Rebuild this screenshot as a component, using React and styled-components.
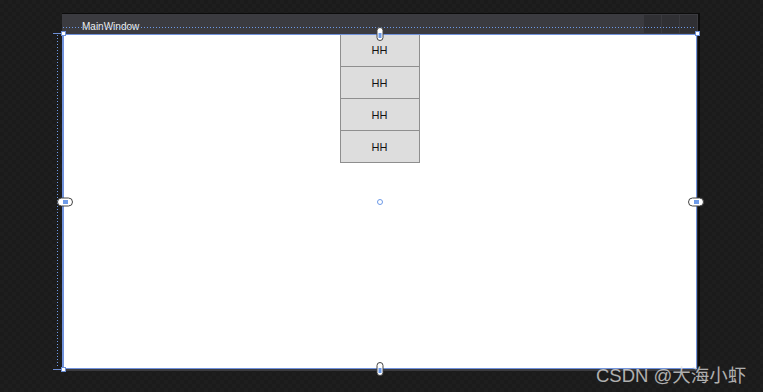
import styled, { createGlobalStyle } from "styled-components";

const GlobalStyle = createGlobalStyle`
  html, body {
    margin: 0;
    padding: 0;
    background: #1e1e1e;
  }
  body {
    font-family: "Liberation Sans", Arial, sans-serif;
  }
`;

const Stage = styled.div`
  position: relative;
  width: 763px;
  height: 392px;
  overflow: hidden;
  box-sizing: border-box;
  padding: 13px 0 0 62px;
  background-color: #1e1e1e;
  background-image:
    linear-gradient(45deg, #1b1b1b 25%, transparent 25%, transparent 75%, #1b1b1b 75%),
    linear-gradient(45deg, #1b1b1b 25%, transparent 25%, transparent 75%, #1b1b1b 75%);
  background-size: 8px 8px;
  background-position: 0 0, 4px 4px;
`;

const Window = styled.div`
  width: 636px;
  display: flex;
  flex-direction: column;
  background: #2b2b2e;
  border-top: 1px solid #0c0c0c;
  border-right: 2px solid #0c0c0c;
  border-bottom: 2px solid #3a3a3e;
`;

const TitleBar = styled.div`
  height: 20px;
  box-sizing: border-box;
  display: flex;
  align-items: stretch;
  padding-left: 20px;
  background: #3b3b40;
`;

const Title = styled.span`
  flex: 1;
  font-size: 10px;
  line-height: 10px;
  padding-top: 8px;
  color: #ececec;
`;

const CaptionButtons = styled.div`
  display: flex;
  gap: 1px;
  padding: 1px 1px 1px 0;
`;

const CaptionButton = styled.div`
  width: 17px;
  background: #303034;
`;

const Client = styled.div`
  height: 333px;
  margin-right: 1px;
  background: #ffffff;
  border: 1px solid #7092dc;
  border-left-width: 2px;
  display: flex;
  flex-direction: column;
  align-items: center;
`;

const ButtonStack = styled.div`
  display: flex;
  flex-direction: column;
  margin-left: -1px;
`;

const HButton = styled.div`
  box-sizing: border-box;
  width: 80px;
  height: ${(p) => (p.first ? "32px" : "33px")};
  margin-top: ${(p) => (p.first ? "0" : "-1px")};
  display: flex;
  align-items: center;
  justify-content: center;
  background: #dddddd;
  border: 1px solid #8e8e8e;
  border-top: ${(p) => (p.first ? "none" : "1px solid #8e8e8e")};
  font-size: 11px;
  line-height: 11px;
  padding-top: ${(p) => (p.first ? "0" : "1px")};
  color: #111;
`;

const dots = (dir) =>
  `repeating-linear-gradient(${dir}, #6d9ae8 0 1px, transparent 1px 3px)`;

const DotLineH = styled.div`
  position: absolute;
  left: 63px;
  top: 27px;
  width: 633px;
  height: 1px;
  background: ${dots("90deg")};
`;

const DotLineV = styled.div`
  position: absolute;
  left: 57px;
  top: 35px;
  width: 1px;
  height: 333px;
  background: ${dots("180deg")};
`;

const Tick = styled.div`
  position: absolute;
  left: 53px;
  top: ${(p) => p.y}px;
  width: 10px;
  height: 1px;
  background: #6d8fd6;
`;

const Corner = styled.div`
  position: absolute;
  left: ${(p) => p.x}px;
  top: ${(p) => p.y}px;
  width: 3px;
  height: 3px;
  background: #ffffff;
  border: 1px solid #6d8fd6;
`;

const Grip = styled.svg`
  position: absolute;
  left: ${(p) => p.x}px;
  top: ${(p) => p.y}px;
`;

const CenterDot = styled.div`
  position: absolute;
  left: 377px;
  top: 199px;
  width: 4px;
  height: 4px;
  border-radius: 50%;
  border: 1px solid #6d9ae8;
  background: #fff;
`;

const Watermark = styled.div`
  position: absolute;
  left: 596px;
  top: 361px;
  font-family: "Liberation Sans", "Noto Sans CJK SC", sans-serif;
  font-size: 18.5px;
  color: rgba(225, 225, 225, 0.75);
  white-space: nowrap;
`;

function VGrip({ x, y }) {
  return (
    <Grip x={x} y={y} width="8" height="14" viewBox="0 0 8 14">
      <rect x="1" y="0.5" width="6" height="13" rx="3" fill="#fff" stroke="#444" />
      <rect x="2.5" y="6" width="3" height="5" fill="#6d9ae8" />
    </Grip>
  );
}

function HGrip({ x, y }) {
  return (
    <Grip x={x} y={y} width="16" height="10" viewBox="0 0 16 10">
      <rect x="0.5" y="1" width="15" height="8" rx="4" fill="#fff" stroke="#444" />
      <rect x="6" y="3" width="5" height="4" fill="#6d9ae8" />
    </Grip>
  );
}

export default function App() {
  return (
    <>
      <GlobalStyle />
      <Stage>
        <Window>
          <TitleBar>
            <Title>MainWindow</Title>
            <CaptionButtons>
              <CaptionButton />
              <CaptionButton />
              <CaptionButton />
            </CaptionButtons>
          </TitleBar>
          <Client>
            <ButtonStack>
              <HButton first>HH</HButton>
              <HButton>HH</HButton>
              <HButton>HH</HButton>
              <HButton>HH</HButton>
            </ButtonStack>
          </Client>
        </Window>

        <DotLineH />
        <DotLineV />
        <Tick y={33} />
        <Tick y={369} />
        <Corner x={61} y={31} />
        <Corner x={695} y={31} />
        <Corner x={61} y={367} />
        <VGrip x={376} y={27} />
        <VGrip x={376} y={362} />
        <HGrip x={57} y={197} />
        <HGrip x={688} y={197} />
        <CenterDot />
        <Watermark>CSDN @大海小虾</Watermark>
      </Stage>
    </>
  );
}
